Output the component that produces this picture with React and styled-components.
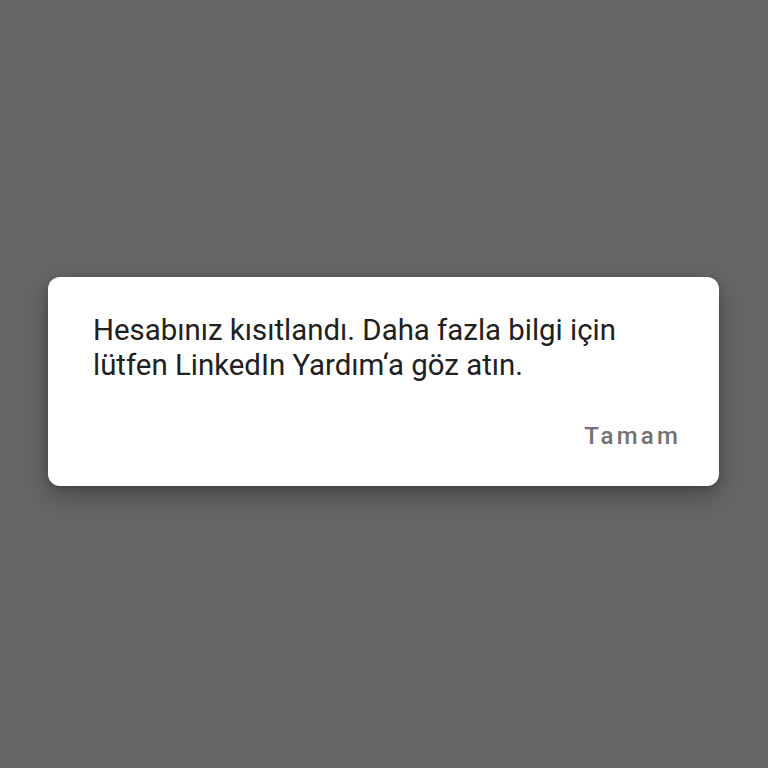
import React from "react";
import styled, { createGlobalStyle } from "styled-components";

const Global = createGlobalStyle`
  html, body { margin: 0; padding: 0; background: #666666; }
  body { font-family: Roboto, "Noto Sans", sans-serif; }
`;

const Screen = styled.div`
  width: 768px;
  height: 768px;
  background: #666666;
  box-sizing: border-box;
  padding: 277px 49px 0 48px;
`;

const Card = styled.div`
  background: #ffffff;
  border-radius: 12px;
  height: 209px;
  box-sizing: border-box;
  padding: 36px 38px 0 45px;
  box-shadow: 0 10px 26px rgba(0, 0, 0, 0.28), 0 2px 6px rgba(0, 0, 0, 0.18);
  display: flex;
  flex-direction: column;
`;

const Message = styled.p`
  margin: 0;
  font-size: 29.4px;
  line-height: 35px;
  color: #202020;
  font-weight: 400;
`;

const Actions = styled.div`
  display: flex;
  justify-content: flex-end;
  margin-top: 40px;
`;

const TextButton = styled.button`
  border: 0;
  background: none;
  padding: 0;
  font-family: Roboto, "Noto Sans", sans-serif;
  font-size: 24px;
  font-weight: 500;
  letter-spacing: 3.2px;
  line-height: 26px;
  color: #727272;
  cursor: pointer;
`;

export default function App() {
  return (
    <>
      <Global />
      <Screen>
        <Card>
          <Message>
            Hesabınız kısıtlandı. Daha fazla bilgi için
            <br />
            lütfen LinkedIn Yardım‘a göz atın.
          </Message>
          <Actions>
            <TextButton>Tamam</TextButton>
          </Actions>
        </Card>
      </Screen>
    </>
  );
}
